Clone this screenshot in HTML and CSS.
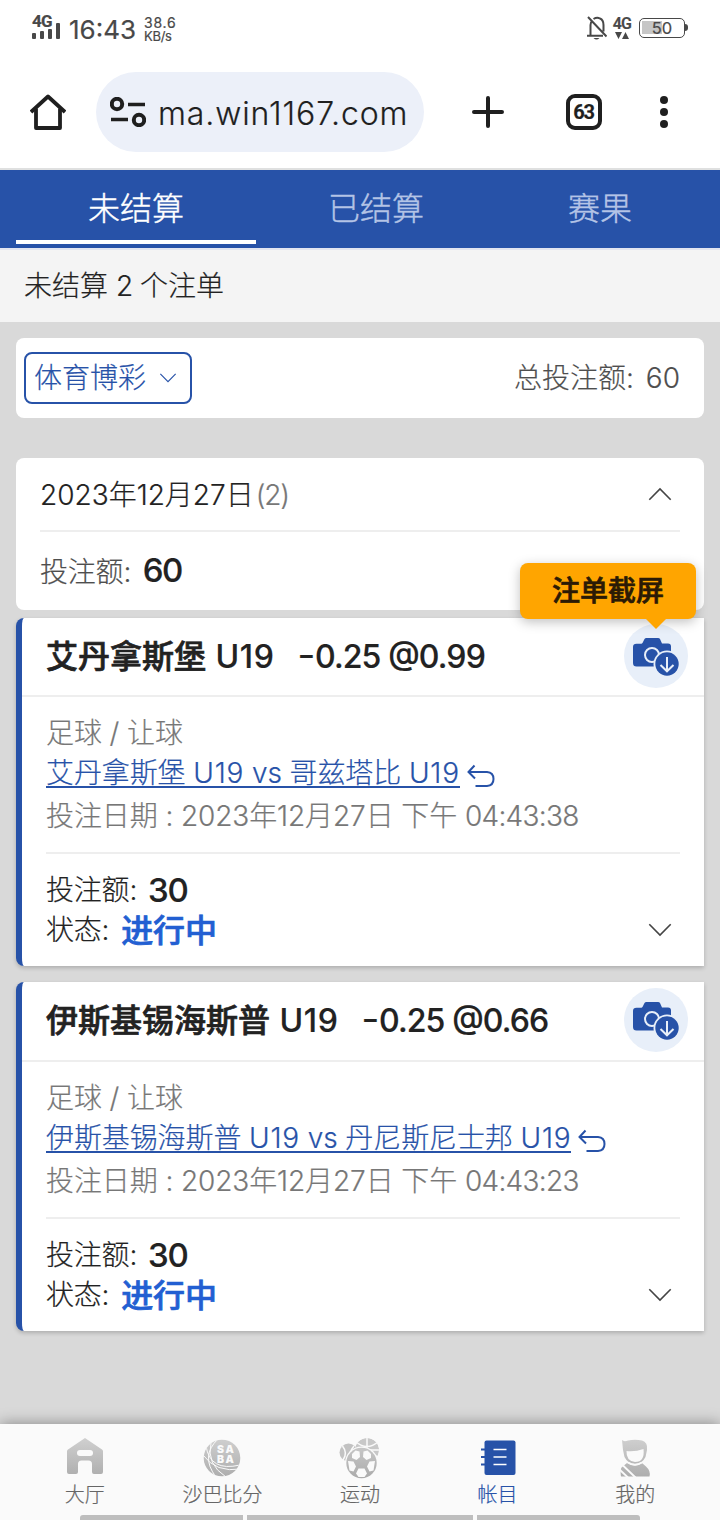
FILE: index.html
```html
<!DOCTYPE html>
<html lang="zh-CN">
<head>
<meta charset="utf-8">
<title>未结算</title>
<link rel="stylesheet" href="styles.css">
</head>
<body>
<svg class="defs" width="0" height="0" aria-hidden="true">
  <defs>
    <linearGradient id="metal" x1="0" y1="0" x2="0" y2="40" gradientUnits="userSpaceOnUse"><stop offset="0" stop-color="#d0d0d0"/><stop offset="1" stop-color="#acacac"/></linearGradient>
    <clipPath id="sphere"><circle cx="20" cy="20" r="18.3"/></clipPath>
    <clipPath id="basket"><circle cx="29" cy="13" r="12"/></clipPath>
    <symbol id="camera" viewBox="0 0 64 64">
      <path d="M18.500 19 L20.500 15 Q21 14 22.500 14 H34 Q35.500 14 36 15 L38 19.500 H44 Q47 19.500 47 22.500 V42.500 H12.500 Q9 42.500 9 39 V23 Q9 19.800 12.500 19.800 H17.500 Z" fill="#2752a8"/>
      <circle cx="28" cy="31" r="7" fill="none" stroke="#e8eff9" stroke-width="2"/>
      <circle cx="43" cy="40" r="13.500" fill="#e8eff9"/>
      <circle cx="43" cy="40" r="11.700" fill="#2752a8"/>
      <path d="M43 33 V47 M36.500 41 L43 47.300 L49.500 41" fill="none" stroke="#e8eff9" stroke-width="2"/>
    </symbol>
    <symbol id="down" viewBox="0 0 24 14"><path d="M1.300 1.300 L12 12 L22.700 1.300" fill="none" stroke="currentColor" stroke-width="1.600"/></symbol>
    <symbol id="back" viewBox="0 0 28 24"><path d="M7.500 1.500 L1.500 8 L8 14.500 M1.500 8 H20 Q26.500 8.500 26.500 15 T20 22 H8.500" fill="none" stroke="currentColor" stroke-width="2"/></symbol>
  </defs>
</svg>

<div class="statusbar">
  <div class="signal"><b>4G</b>
    <svg width="28" height="16" viewBox="0 0 28 16" fill="#484848"><rect x="0" y="10" width="4" height="6" rx="1"/><rect x="8" y="8" width="4" height="8" rx="1"/><rect x="16" y="6" width="4" height="10" rx="1"/><rect x="24" y="0" width="4" height="16" rx="1"/></svg>
  </div>
  <span class="clock">16:43</span>
  <div class="speed"><span>38.6</span><span class="unit">KB/s</span></div>
  <div class="status-right">
    <svg width="20" height="24" viewBox="0 0 20 24" fill="none" stroke="#484848" stroke-width="2"><path d="M3.500 19.500 V9 Q3.500 6.500 5 5 M6.500 3 Q10 .8 13 2.500 Q16.500 4 16.500 9 V15.500 M0 19.700 H16 M1 1 L19.500 20.500"/><path d="M6.500 22 H12.500 Q9.500 25 6.500 22 Z" fill="#484848" stroke="none"/></svg>
    <div class="net"><b>4G</b><svg width="14" height="7" viewBox="0 0 14 7" fill="#484848"><path d="M0 0 H7 L3.500 7 Z M7 7 H14 L10.500 0 Z"/></svg></div>
    <div class="battery"><span>50</span></div><i class="tip"></i>
  </div>
</div>

<header class="toolbar">
  <svg class="home" width="36" height="36" viewBox="0 0 36 36" fill="none" stroke="#1f1f1f" stroke-width="3.800" stroke-linejoin="round"><path d="M1 18 L18 2.500 L35 18"/><path d="M6 14.500 V34 H30 V14.500"/></svg>
  <div class="omnibox">
    <svg width="36" height="30" viewBox="0 0 36 30" fill="none" stroke="#1f1f1f" stroke-width="4"><circle cx="7" cy="7" r="5.200"/><circle cx="29" cy="23" r="5.200"/><path stroke-width="3.500" d="M18 7.500 H35 M1 22.500 H18"/></svg>
    <span class="url">ma.win1167.com</span>
  </div>
  <svg class="plus" width="32" height="32" viewBox="0 0 32 32" stroke="#1f1f1f" stroke-width="4" stroke-linecap="round"><path d="M2 16 H30 M16 2 V30"/></svg>
  <div class="tabcount">63</div>
  <svg class="more" width="8" height="32" viewBox="0 0 8 32" fill="#1f1f1f"><circle cx="4" cy="4" r="4"/><circle cx="4" cy="16" r="4"/><circle cx="4" cy="28" r="4"/></svg>
</header>

<nav class="tabs"><a class="tab active">未结算</a><a class="tab">已结算</a><a class="tab last">赛果</a></nav>
<div class="summary">未结算 <span class="two">2</span> 个注单</div>

<main>
  <section class="filter">
    <button class="select">体育博彩<svg width="18" height="10"><use href="#down"/></svg></button>
    <div class="total">总投注额: <span>60</span></div>
  </section>

  <section class="day">
    <div class="date"><span class="date-text">2023年12月27日</span><span class="count">(2)</span><svg class="chev up" width="24" height="14"><use href="#down"/></svg></div>
    <div class="stake">投注额: <b>60</b></div>
  </section>

  <article class="bet first">
    <div class="bet-head"><h2><span>艾丹拿斯堡</span> <em>U19</em><em class="odds"><i class="minus">-</i>0.25 @0.99</em></h2>
      <div class="shot"><svg width="64" height="64"><use href="#camera"/></svg><div class="tooltip">注单截屏</div></div>
    </div>
    <div class="bet-body">
      <div class="kind">足球 / 让球</div>
      <div class="match"><a>艾丹拿斯堡 <em>U19</em> vs 哥兹塔比 <em>U19</em></a><svg width="28" height="24"><use href="#back"/></svg></div>
      <div class="when">投注日期 : 2023年12月27日 下午 <em>04:43:38</em></div>
      <div class="foot">
        <div class="row">投注额:<b class="amount">30</b></div>
        <div class="row">状态:<b class="state">进行中</b><svg class="chev" width="24" height="14"><use href="#down"/></svg></div>
      </div>
    </div>
  </article>

  <article class="bet">
    <div class="bet-head"><h2><span>伊斯基锡海斯普</span> <em>U19</em><em class="odds"><i class="minus">-</i>0.25 @0.66</em></h2>
      <div class="shot"><svg width="64" height="64"><use href="#camera"/></svg></div>
    </div>
    <div class="bet-body">
      <div class="kind">足球 / 让球</div>
      <div class="match"><a>伊斯基锡海斯普 <em>U19</em> vs 丹尼斯尼士邦 <em>U19</em></a><svg width="28" height="24"><use href="#back"/></svg></div>
      <div class="when">投注日期 : 2023年12月27日 下午 <em>04:43:23</em></div>
      <div class="foot">
        <div class="row">投注额:<b class="amount">30</b></div>
        <div class="row">状态:<b class="state">进行中</b><svg class="chev" width="24" height="14"><use href="#down"/></svg></div>
      </div>
    </div>
  </article>
</main>

<nav class="bottom">
  <a><svg width="40" height="40" viewBox="0 0 40 40"><path d="M20 0 L37 11.500 Q38 12 38 13.500 V34 Q38 36 36 36 H29 Q27 36 27 34 V26 Q27 22.500 23.500 22.500 H16.500 Q13 22.500 13 26 V34 Q13 36 11 36 H4 Q2 36 2 34 V13.500 Q2 12 3 11.500 Z" fill="url(#metal)"/><rect x="12" y="12" width="16" height="6" rx="3" fill="#fafafa"/></svg>大厅</a>
  <a><svg width="40" height="40" viewBox="0 0 40 40"><circle cx="20" cy="20" r="18.300" fill="url(#metal)"/><g clip-path="url(#sphere)" fill="none" stroke="#fafafa" stroke-width="1"><path d="M4 8 Q8 34 38 27 M9 5 Q4 26 24 39 M16 1 Q-2 18 14 39 M1 17 Q14 35 39 31"/></g><g class="saba"><text x="15" y="14.500">S</text><text x="23.500" y="14.500">A</text><text x="15" y="24.500">B</text><text x="23.500" y="24.500">A</text></g></svg>沙巴比分</a>
  <a><svg width="44" height="42" viewBox="0 0 44 42"><circle cx="10.500" cy="15.500" r="9" fill="#c2c2c2"/><path d="M4.500 9 Q10 16 5 23 M16 9 Q11 15 12 22" stroke="#fafafa" stroke-width="1.500" fill="none"/><g clip-path="url(#basket)"><circle cx="29" cy="13" r="12" fill="#c8c8c8"/><path d="M29 0 V26 M16 13 H42 M17 4 Q29 15 41 4 M18 22 Q29 8 41 22" fill="none" stroke="#fafafa" stroke-width="1.500"/></g><circle cx="23.500" cy="26" r="16.500" fill="#fafafa"/><circle cx="23.500" cy="26" r="15.200" fill="url(#metal)"/><g fill="#fafafa"><path d="M17.500 13.500 L21.500 14.500 L22 20 L18.500 23 L14 21 L14 17 Z"/><path d="M29.500 13.500 L33 17 L33 21 L28.500 23 L25 20 L25.500 14.500 Z"/><path d="M10 24 L15.500 24.500 L18 29.500 L15.500 34.500 L11.500 33.500 Z"/><path d="M37 24 L31.500 24.500 L29 29.500 L31.500 34.500 L35.500 33.500 Z"/><path d="M20.500 31.500 H26.500 L29 36.500 L26.500 40 H20.500 L18 36.500 Z"/></g></svg>运动</a>
  <a class="on"><svg width="40" height="40" viewBox="0 0 40 40"><rect x="6.500" y="2.500" width="31" height="34.500" rx="2" fill="#2752a8"/><path d="M3 11.500 H9 M3 19 H9 M3 26.500 H9" stroke="#2752a8" stroke-width="1.800"/><path d="M15.500 11.500 H28.500 M15.500 19 H28.500 M15.500 26.500 H28.500" stroke="#fff" stroke-width="1.700"/></svg>帐目</a>
  <a><svg width="40" height="40" viewBox="0 0 40 40"><path d="M7 2 Q9 4 13 2.500 Q20 1 27 2.500 Q33 4 32 12 L30.500 19 Q27 26 20 26 Q13 26 9.500 19 L8 12 Z M12 25 L6.500 29.500 Q5 32 6 38.500 H34.500 Q36 33 31 28.500 L27 25 Q20 30 12 25 Z" fill="url(#metal)"/><path d="M11.500 13 Q20 14 28.500 11 Q30 24 20 24 Q11 23 11.500 13 Z" fill="#fafafa"/><path d="M13 24.500 Q20 29 27 24.500 M4 31 L13.500 40 M8 27.500 L21 40" fill="none" stroke="#fafafa" stroke-width="1.800"/></svg>我的</a>
  <div class="gesture"><i></i><i class="mid"></i><i></i></div>
</nav>
</body>
</html>
```
FILE: styles.css
```css
* { box-sizing: border-box; }
body { margin: 0; width: 720px; height: 1520px; overflow: hidden; display: flex; flex-direction: column; background: #d9d9d9; color: #222; font: 300 28px/40px Inter, "Noto Sans CJK SC", sans-serif; white-space: nowrap; -webkit-text-stroke: .2px currentColor; }
em, i { font-style: normal; }
svg { display: block; flex: none; }
.defs { position: absolute; }

.statusbar { height: 56px; flex: none; background: #fff; display: flex; align-items: flex-start; padding: 0 32px; color: #484848; }
.signal { width: 28px; margin-top: 14px; }
.signal b { display: block; height: 9px; font: 700 17px/14px Roboto, sans-serif; letter-spacing: -.8px; }
.clock { margin: 10px 0 0 9px; width: 67px; font-weight: 400; font-size: 26px; }
.speed { margin: 16px 0 0 8px; display: flex; flex-direction: column; font-size: 14px; line-height: 14px; font-weight: 400; letter-spacing: .8px; }
.speed .unit { font-size: 13px; line-height: 12px; letter-spacing: -.3px; }
.status-right { margin: 16px 0 0 auto; display: flex; }
.net { margin-left: 5px; width: 20px; display: flex; flex-direction: column; align-items: center; }
.net b { font: 600 16px/16px Roboto, sans-serif; letter-spacing: -.8px; }
.battery { margin: 2px 0 0 7px; width: 46px; height: 20px; border: 1.500px solid #484848; border-radius: 5px; padding: 0 2px; background: linear-gradient(#c6c6c6, #c6c6c6) 2px 2px / 20px 13px no-repeat; font-size: 16.500px; line-height: 18px; font-weight: 400; text-align: center; }
.tip { width: 3px; height: 7px; margin: 8px 0 0; background: #484848; border-radius: 0 3px 3px 0; }

.toolbar { height: 114px; flex: none; background: #fff; border-bottom: 2px solid #dfe0e0; display: flex; align-items: center; padding: 0 52px 0 30px; }
.omnibox { width: 328px; height: 80px; margin-left: 30px; border-radius: 40px; background: #ecf0f9; display: flex; align-items: center; padding-left: 14px; }
.url { margin: 4px 0 0 12px; font-size: 32px; font-weight: 350; color: #1f1f1f; letter-spacing: .9px; }
.plus { margin-left: 48px; }
.tabcount { margin-left: 62px; width: 36px; height: 36px; border: 4px solid #1f1f1f; border-radius: 9px; font: 700 20px/29px Roboto, sans-serif; letter-spacing: -1.200px; text-indent: -1px; text-align: center; color: #1f1f1f; }
.more { margin-left: 58px; }

.tabs { height: 80px; flex: none; display: flex; background: #2752a8; border-bottom: 2px solid #e2e5f0; padding: 0 16px; }
.tab { width: 240px; height: 74px; padding-top: 19px; text-align: center; font-size: 32px; color: #b4c4e6; -webkit-text-stroke-width: .4px; }
.tab.last { width: 208px; }
.tab.active { color: #fff; border-bottom: 4px solid #fff; }
.summary { height: 72px; flex: none; background: #f4f4f4; padding: 16px 24px; }
.two { letter-spacing: -1px; }

main { flex: 1; padding: 16px 16px 0; }
.filter { height: 80px; border-radius: 8px; background: #fff; display: flex; align-items: center; justify-content: space-between; padding: 0 24px 0 8px; color: #4e4e4e; }
.select { width: 168px; height: 52px; border: 2px solid #2752a8; border-radius: 8px; background: #fff; color: #2752a8; padding: 0 13px 0 8px; display: flex; align-items: center; justify-content: space-between; font: inherit; }
.total span { margin-left: 4px; }

.day { height: 152px; margin-top: 40px; border-radius: 8px; background: #fff; padding: 0 24px; }
.date { height: 74px; border-bottom: 2px solid #eee; display: flex; align-items: center; }
.date-text { padding-top: 1px; }
.count { color: #777; margin: 2px 0 0 2px; letter-spacing: -1.200px; }
.chev { margin: 0 8px 0 auto; color: #444; }
.up { transform: rotate(180deg); }
.stake { padding-top: 18px; color: #4e4e4e; letter-spacing: -.2px; }
b, h2 { font-weight: 600; }
.stake b { margin-left: 4px; font-size: 33px; font-weight: 550; color: #222; letter-spacing: -1.600px; }

.bet { margin-top: 16px; border-left: 6px solid #2752a8; border-radius: 8px 0 0 8px; background: #fff; box-shadow: 0 2px 4px rgba(0,0,0,.2); height: 349px; }
.bet.first { margin-top: 8px; height: 348px; }
.bet-head { height: 80px; border-bottom: 2px solid #eee; display: flex; align-items: center; justify-content: space-between; padding: 0 16px 0 24px; }
.first .bet-head { height: 79px; }
h2 { margin: 0; font-size: 32px; font-weight: 500; }
h2 span, .state, .tooltip { -webkit-text-stroke-width: .7px; }
h2 em { margin-left: 1px; font-weight: 500; letter-spacing: .6px; }
h2 .odds { margin-left: 25px; letter-spacing: -.85px; font-feature-settings: "case"; }
.minus { display: inline-block; transform: scaleX(1.200); margin-right: 1.500px; }
.shot { position: relative; width: 64px; height: 64px; margin-bottom: 2px; border-radius: 50%; background: #e8eff9; }
.tooltip { position: absolute; right: -8px; bottom: 69px; width: 176px; height: 56px; border-radius: 8px; background: #ffa500; box-shadow: 0 3px 12px rgba(0,0,0,.25); color: #2b1a05; -webkit-text-stroke-color: #2b1a05; text-align: center; font-weight: 500; line-height: 56px; }
.tooltip::after { content: ""; position: absolute; right: 30px; top: 56px; border: 10px solid transparent; border-top-color: #ffa500; border-bottom: 0; }

.bet-body { padding: 16px 24px 0; }
.kind { color: #777; letter-spacing: -.1px; }
.match { height: 42px; display: flex; align-items: center; color: #2752a8; }
.match a { position: relative; line-height: 40px; top: -1px; letter-spacing: -.1px; }
.match a::after { content: ""; position: absolute; left: 0; right: 0; bottom: 5px; height: 2px; background: currentColor; }
.match em { letter-spacing: .8px; }
.match svg { margin: 4px 0 0 7px; }
.when { color: #777; padding-top: 1px; height: 43px; letter-spacing: -.1px; }
.when em { letter-spacing: -.7px; }
.foot { margin-top: 14px; border-top: 2px solid #eee; padding-top: 16px; }
.row { height: 40px; display: flex; align-items: center; letter-spacing: -.2px; }
.amount { margin-left: 11px; font-size: 33px; font-weight: 550; letter-spacing: -1.300px; }
.state { margin: 1px 0 0 12px; font-size: 32px; font-weight: 500; color: #225fd2; }

.bottom { position: relative; height: 96px; flex: none; background: #fafafa; box-shadow: 0 0 14px rgba(0,0,0,.4); display: flex; padding: 13px 16px 0; font-size: 20px; line-height: 24px; color: #666; }
.bottom a { flex: 1; display: flex; flex-direction: column; align-items: center; }
.bottom a svg { height: 42px; margin-bottom: 4px; }
.bottom a.on { color: #2752a8; }
.saba { font: 900 10.500px Inter, sans-serif; fill: #fafafa; -webkit-text-stroke-width: 0; }
.gesture { position: absolute; left: 80px; right: 80px; bottom: 0; height: 5px; display: flex; gap: 4px; }
.gesture i { width: 163px; background: #bebebe; border-radius: 3px 0 0 0; }
.gesture i:last-child { border-radius: 0 3px 0 0; }
.gesture .mid { width: 226px; border-radius: 0; }
```
